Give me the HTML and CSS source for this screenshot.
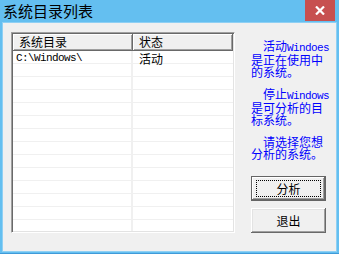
FILE: index.html
```html
<!DOCTYPE html>
<html lang="zh-CN">

<head>
    <meta charset="UTF-8">
    <title>系统目录列表</title>
    <link rel="stylesheet" href="styles.css">
</head>

<body>
    <div class="window">
        <div class="titlebar">
            <span class="title">系统目录列表</span>
            <div class="close">
                <svg width="10" height="9" viewBox="0 0 10 9">
                    <path d="M1 0.5 L9 8.5 M9 0.5 L1 8.5" stroke="#fff" stroke-width="2.2" fill="none" />
                </svg>
            </div>
        </div>
        <div class="client">
            <div class="listview">
                <div class="lv-head">
                    <div class="hcell c1">系统目录</div>
                    <div class="hcell c2">状态</div>
                </div>
                <div class="lv-body">
                    <div class="row">
                        <div class="cell c1 mono">C:\Windows\</div>
                        <div class="cell c2">活动</div>
                    </div>
                    <div class="row"><div class="cell c1"></div><div class="cell c2"></div></div>
                    <div class="row"><div class="cell c1"></div><div class="cell c2"></div></div>
                    <div class="row"><div class="cell c1"></div><div class="cell c2"></div></div>
                    <div class="row"><div class="cell c1"></div><div class="cell c2"></div></div>
                    <div class="row"><div class="cell c1"></div><div class="cell c2"></div></div>
                    <div class="row"><div class="cell c1"></div><div class="cell c2"></div></div>
                    <div class="row"><div class="cell c1"></div><div class="cell c2"></div></div>
                    <div class="row"><div class="cell c1"></div><div class="cell c2"></div></div>
                    <div class="row"><div class="cell c1"></div><div class="cell c2"></div></div>
                    <div class="row"><div class="cell c1"></div><div class="cell c2"></div></div>
                    <div class="row"><div class="cell c1"></div><div class="cell c2"></div></div>
                    <div class="row"><div class="cell c1"></div><div class="cell c2"></div></div>
                    <div class="row"><div class="cell c1"></div><div class="cell c2"></div></div>
                </div>
            </div>
            <div class="side">
                <p class="note"><span class="ind"></span>活动<span class="mono">Windoes</span><br>是正在使用中<br>的系统。</p>
                <p class="note"><span class="ind"></span>停止<span class="mono">Windows</span><br>是可分析的目<br>标系统。</p>
                <p class="note"><span class="ind"></span>请选择您想<br>分析的系统。</p>
                <button class="btn default"><span class="focus">分析</span></button>
                <button class="btn">退出</button>
            </div>
        </div>
    </div>
</body>

</html>
```

FILE: styles.css
```css
* {
    margin: 0;
    padding: 0;
    box-sizing: border-box;
}

body {
    font-family: "Noto Sans CJK SC", sans-serif;
    font-size: 12px;
    background: #fff;
}

.window {
    width: 339px;
    height: 254px;
    background: #64bff0;
    border-bottom: 1px solid #3f9ad8;
    display: flex;
    flex-direction: column;
}

.titlebar {
    height: 23px;
    display: flex;
    align-items: flex-start;
}

.title {
    font-size: 15px;
    line-height: 22px;
    padding-left: 3px;
    color: #000;
}

.close {
    margin-left: auto;
    margin-right: 4px;
    width: 30px;
    height: 21px;
    background: #c75050;
    display: flex;
    align-items: center;
    justify-content: center;
}

.client {
    flex: 1;
    margin: 0 3px 2px 3px;
    background: #f0f0f0;
    box-shadow: 0 0 0 1px #8fd0f4;
    display: flex;
    padding: 9px 0 0 8px;
}

/* list view */
.listview {
    width: 224px;
    height: 201px;
    background: #fff;
    border-top: 1px solid #a0a0a0;
    border-left: 1px solid #a0a0a0;
    border-right: 1px solid #fff;
    border-bottom: 1px solid #fff;
    box-shadow: inset 1px 1px #696969, inset -1px -1px #e3e3e3;
    padding: 1px 1px 1px 1px;
    overflow: hidden;
    display: flex;
    flex-direction: column;
}

.lv-head {
    display: flex;
    height: 17px;
    background: #f0f0f0;
}

.hcell {
    height: 17px;
    line-height: 15px;
    padding-left: 6px;
    border-right: 1px solid #696969;
    border-bottom: 1px solid #696969;
    box-shadow: inset 1px 1px #fff, inset -1px -1px #a0a0a0;
}

.c1 {
    width: 120px;
}

.c2 {
    width: 100px;
}

.lv-body {
    flex: 1;
    overflow: hidden;
}

.row {
    display: flex;
    height: 13px;
    border-bottom: 1px solid #f0f0f0;
}

.cell {
    line-height: 13px;
    padding-left: 6px;
    padding-top: 1px;
}

.cell.c1 {
    padding-left: 3px;
    border-right: 2px solid #f0f0f0;
    width: 120px;
}

.mono {
    font-family: "Liberation Mono", monospace;
    font-size: 11px;
    letter-spacing: -0.6px;
}

/* right side */
.side {
    width: 78px;
    margin-left: 16px;
    padding-top: 8px;
    display: flex;
    flex-direction: column;
}

.note {
    color: #0000ff;
    line-height: 12px;
    height: 48px;
    white-space: nowrap;
}

.ind {
    display: inline-block;
    width: 12px;
}

.btn {
    width: 75px;
    height: 25px;
    margin-top: 7px;
    font-family: "Noto Sans CJK SC", sans-serif;
    font-size: 12px;
    color: #000;
    background: #f0f0f0;
    border: none;
    box-shadow: inset -1px -1px #696969, inset 1px 1px #fff, inset -2px -2px #a0a0a0, inset 2px 2px #e3e3e3;
}

.btn.default {
    margin-top: 0;
    border: 1px solid #646464;
    box-shadow: inset -1px -1px #696969, inset 1px 1px #fff, inset -2px -2px #a0a0a0;
    padding: 3px 4px;
}

.focus {
    display: flex;
    align-items: center;
    justify-content: center;
    height: 100%;
    border: 1px dotted #000;
}

.side .note:last-of-type {
    height: 28px;
    margin-bottom: 12px;
}
```
